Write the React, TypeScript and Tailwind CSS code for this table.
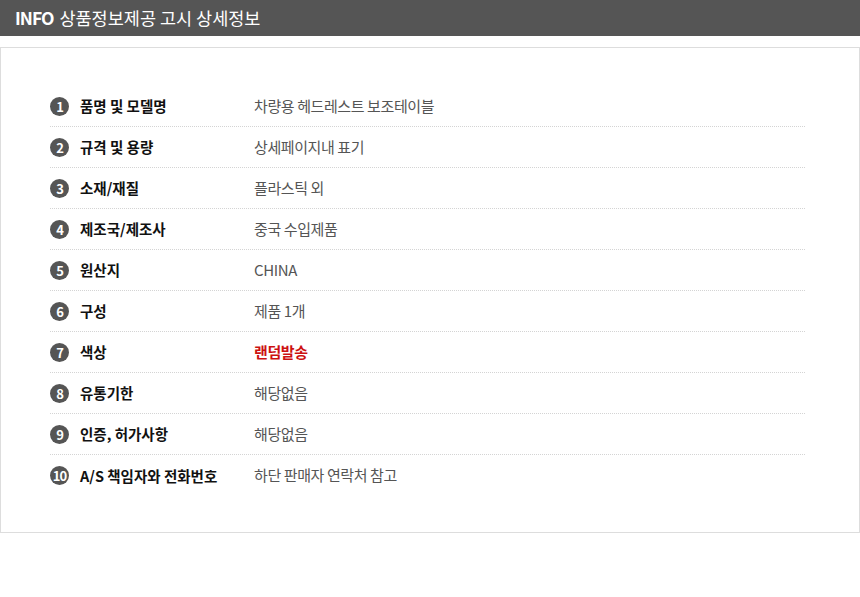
const rows: { label: string; value: string; red?: boolean }[] = [
  { label: "품명 및 모델명", value: "차량용 헤드레스트 보조테이블" },
  { label: "규격 및 용량", value: "상세페이지내 표기" },
  { label: "소재/재질", value: "플라스틱 외" },
  { label: "제조국/제조사", value: "중국 수입제품" },
  { label: "원산지", value: "CHINA" },
  { label: "구성", value: "제품 1개" },
  { label: "색상", value: "랜덤발송", red: true },
  { label: "유통기한", value: "해당없음" },
  { label: "인증, 허가사항", value: "해당없음" },
  { label: "A/S 책임자와 전화번호", value: "하단 판매자 연락처 참고" },
];

export default function App() {
  return (
    <div
      className="w-[860px] h-[597px] bg-white"
      style={{ fontFamily: '"Noto Sans CJK KR", "Noto Sans", sans-serif' }}
    >
      <div className="h-[36px] bg-[#555555] flex items-center pl-[15px] text-white text-[17.5px]">
        <span className="font-bold mr-[6px] tracking-[-1px]">INFO</span>
        <span>상품정보제공 고시 상세정보</span>
      </div>
      <div className="mt-[11px] border border-[#dddddd] pt-[38px] pb-[36px] pl-[49px] pr-[54px]">
        {rows.map((r, i) => (
          <div
            key={i}
            className={
              "h-[41px] flex items-center " +
              (i < rows.length - 1 ? "border-b border-dotted border-[#d4d4d4]" : "")
            }
          >
            <div className="w-[19px] h-[19px] rounded-full bg-[#555555] text-white flex items-center justify-center text-[13px] font-bold tracking-[-1px] leading-none">
              {i + 1}
            </div>
            <div className="w-[185px] pl-[11px] text-[14.5px] font-bold text-[#111111]">
              {r.label}
            </div>
            <div
              className={
                "text-[15px] tracking-[-0.4px] " +
                (r.red ? "text-[#cc1111] font-bold" : "text-[#555555]")
              }
            >
              {r.value}
            </div>
          </div>
        ))}
      </div>
    </div>
  );
}
